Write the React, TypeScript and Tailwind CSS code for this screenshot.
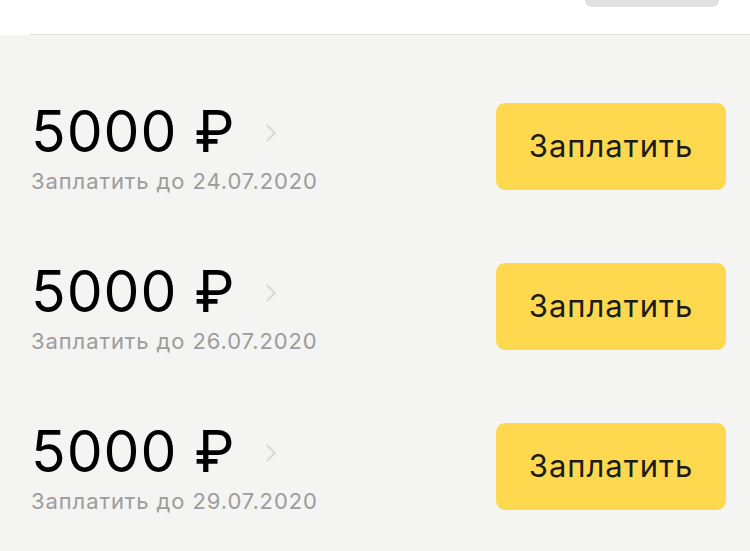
import { ChevronRight } from 'lucide-react'

const bills = [
  { id: 1, amount: '5000 ₽', due: '24.07.2020' },
  { id: 2, amount: '5000 ₽', due: '26.07.2020' },
  { id: 3, amount: '5000 ₽', due: '29.07.2020' },
]

export default function App() {
  return (
    <div className="w-[750px] h-[551px] overflow-hidden flex flex-col bg-[#f4f4f2]" style={{ fontFamily: 'Inter, "Noto Sans", sans-serif' }}>
      {/* Top strip */}
      <div className="h-[34px] flex-shrink-0 bg-white flex justify-end pr-[31px]">
        <div className="w-[134px] h-[7px] rounded-b-[10px] bg-[#e1e1e1]" />
      </div>
      <div className="flex bg-white flex-shrink-0">
        <div className="w-[30px]" />
        <div className="flex-1 h-px bg-[#dedede]" />
      </div>

      {/* Bills */}
      <div className="flex flex-col gap-[73px] pt-[68px] pl-[31px] pr-[24px]">
        {bills.map(b => (
          <div key={b.id} className="h-[87px] flex items-center justify-between">
            <div className="flex flex-col pt-[4px]">
              <div className="flex items-center">
                <span className="text-[57px] leading-[56px] tracking-[1px] text-black">{b.amount}</span>
                <ChevronRight className="ml-[20px] mt-[2px] text-[#dadada]" size={30} strokeWidth={1.8} />
              </div>
              <span className="text-[22px] leading-[26px] mt-[8px] tracking-[0.9px] text-[#9c9c9c]">Заплатить до {b.due}</span>
            </div>
            <button type="button" className="w-[230px] h-[87px] rounded-[9px] bg-[#fed94f] text-[31px] tracking-[1px] text-[#1c1c1c]">
              Заплатить
            </button>
          </div>
        ))}
      </div>
    </div>
  )
}
